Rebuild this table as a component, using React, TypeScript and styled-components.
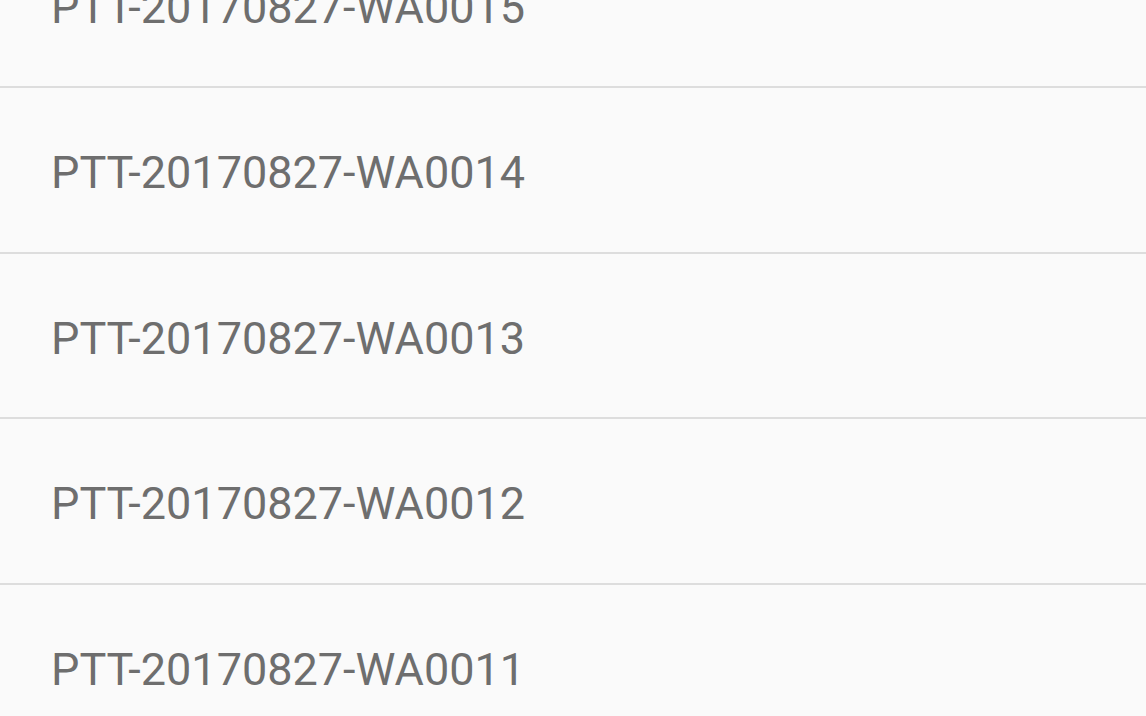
import React from 'react'
import styled, { createGlobalStyle } from 'styled-components'

const GlobalStyle = createGlobalStyle`
  html, body {
    margin: 0;
    padding: 0;
    background: #fafafa;
    overflow: hidden;
  }
`

const Screen = styled.div`
  width: 1146px;
  height: 716px;
  overflow: hidden;
  background: #fafafa;
`

const FileList = styled.ul`
  list-style: none;
  margin: -77.5px 0 0;
  padding: 0;
  display: flex;
  flex-direction: column;
`

const FileRow = styled.li`
  height: 165.5px;
  flex-shrink: 0;
  box-sizing: border-box;
  display: flex;
  align-items: center;
  padding: 6px 0 0 51px;
  border-bottom: 2px solid #dddddd;
  font-family: Roboto, "Noto Sans", sans-serif;
  font-size: 45px;
  color: #6e6e6e;
`

const files = [
  'PTT-20170827-WA0015',
  'PTT-20170827-WA0014',
  'PTT-20170827-WA0013',
  'PTT-20170827-WA0012',
  'PTT-20170827-WA0011',
]

export default function App() {
  return (
    <Screen>
      <GlobalStyle />
      <FileList>
        {files.map(name => (
          <FileRow key={name}>{name}</FileRow>
        ))}
      </FileList>
    </Screen>
  )
}
